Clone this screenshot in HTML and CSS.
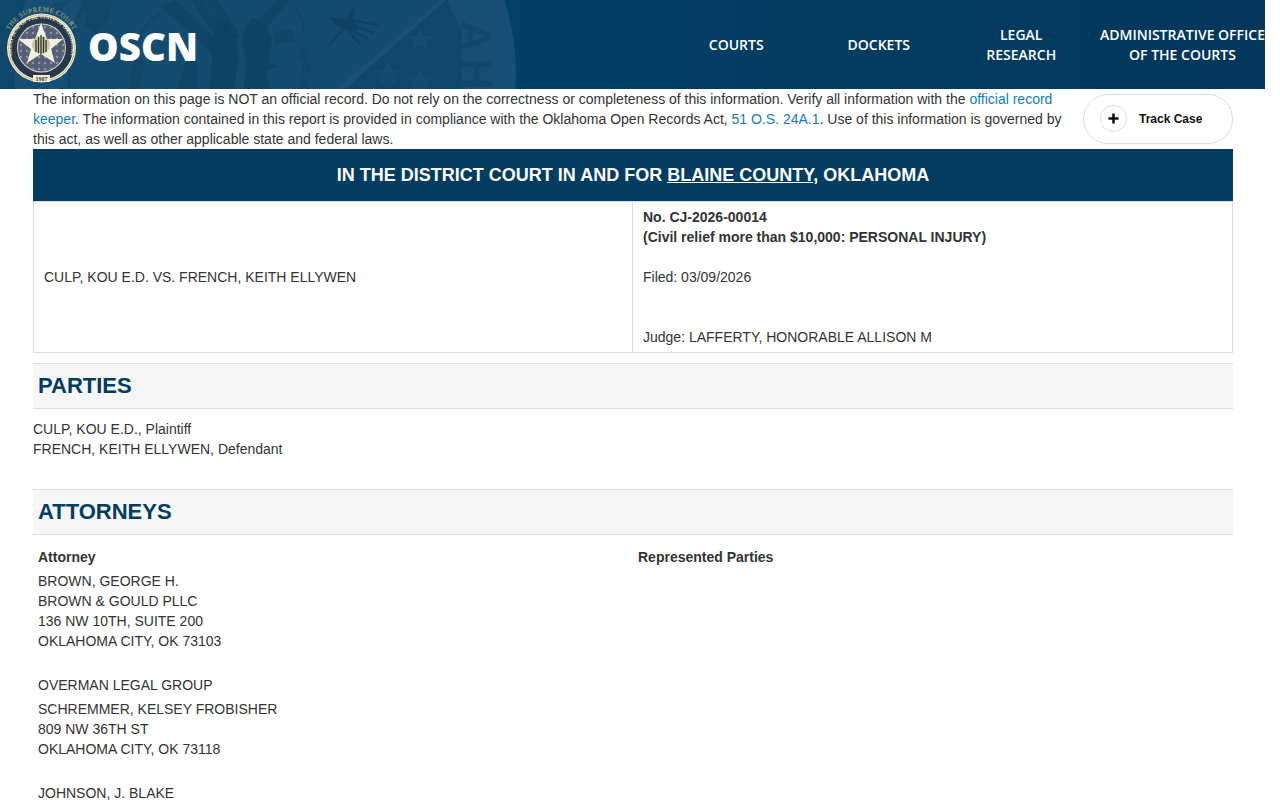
FILE: index.html
```html
<!DOCTYPE html>
<html lang="en">
<head>
    <meta charset="UTF-8">
    <meta name="viewport" content="width=device-width, initial-scale=1.0">
    <title>OSCN - CJ-2026-00014</title>
    <link rel="stylesheet" href="styles.css">
</head>
<body>
    <div class="page">
        <header class="site-header">
            <!-- faded state seal behind the header -->
            <svg class="watermark" viewBox="0 0 660 89" aria-hidden="true">
                <circle cx="265" cy="75" r="251" fill="#174e73"/>
                <circle cx="265" cy="75" r="196" fill="#144b70" stroke="#0f4569" stroke-width="2"/>

                <!-- star field, lower right of the disc -->
                <path d="M345 89L446 0L462 30V89Z" fill="#0f4669"/>
                <path d="M336 89L441 0H446L345 89Z" fill="#18507a"/>
                <g fill="#144b70">
                    <path d="M420 27L424 36L434 36L426 42L429 51L420 45L411 51L414 42L406 36L416 36Z"/>
                    <path d="M388 61L392 70L402 70L394 76L397 85L388 79L379 85L382 76L374 70L384 70Z"/>
                    <path d="M420 68L424 77L434 77L426 83L429 89H411L414 83L406 77L416 77Z"/>
                </g>

                <!-- letters of the ring -->
                <g class="mark-letters">
                    <text transform="translate(461,20) rotate(92)">A</text>
                    <text transform="translate(461,58) rotate(90)">H</text>
                </g>

                <!-- left wreath -->
                <g fill="#104668">
                    <path d="M80 0H112L108 20L96 33L84 26L88 14Z"/>
                    <path d="M128 89L133 62L142 58L144 72L138 89Z"/>
                    <path d="M52 4L72 0L60 12Z" opacity="0.6"/>
                </g>
                <path d="M140 36C146 22 156 14 166 12" fill="none" stroke="#104668" stroke-width="2"/>

                <!-- rays behind the figures -->
                <g fill="#104567">
                    <path d="M160 6L176 0L226 48L218 58Z"/>
                    <path d="M190 0H204L234 44L224 48Z"/>
                    <path d="M206 0H218L240 36L232 42Z"/>
                    <path d="M260 18L278 0H290L266 28Z"/>
                    <path d="M273 33L293 29L296 40L275 44Z"/>
                    <path d="M178 89L186 62L196 60L198 89Z"/>
                </g>

                <!-- two standing figures -->
                <g fill="#0f4366">
                    <path d="M222 20C227 20 230 25 229 31L236 36L238 58L234 89H210L212 58L208 38L216 33C215 27 217 21 222 20Z"/>
                    <path d="M252 18C262 18 270 28 272 40L268 62L278 66L266 72L270 89H244L246 60L242 42C244 30 246 22 252 18Z"/>
                </g>

                <!-- right wreath -->
                <g fill="#104668">
                    <path d="M301 46L308 52L306 60L299 56Z"/>
                    <path d="M304 60L312 66L310 74L303 70Z"/>
                    <path d="M302 72L309 89H299Z"/>
                </g>
                <path d="M296 9C301 15 304 22 303 30" fill="none" stroke="#104668" stroke-width="2"/>

                <!-- arrows and rays, upper right -->
                <g fill="#0e4164">
                    <path d="M328 17L346 19L352 7L356 10L352 20L360 28L350 32L340 28Z"/>
                </g>
                <g stroke="#0e4164" stroke-width="2" fill="none">
                    <path d="M343 30L328 46"/>
                    <path d="M350 20L378 25M352 25L374 33M350 29L368 39M348 31L360 44"/>
                </g>
            </svg>

            <a class="brand" href="#">
                <svg class="seal" viewBox="0 0 84 89" aria-hidden="true">
                    <defs>
                        <path id="sealTop" d="M5 48A36.5 36.5 0 0 1 78 48"/>
                        <path id="sealInner" d="M18 67A30 30 0 1 1 65 67"/>
                        <pattern id="sealDots" width="6" height="6" patternUnits="userSpaceOnUse">
                            <circle cx="3" cy="3" r="1.2" fill="#8b95a8"/>
                        </pattern>
                    </defs>
                    <circle cx="41.5" cy="48" r="34.5" fill="#f1eed9"/>
                    <circle cx="41.5" cy="48" r="33" fill="none" stroke="#a7a266" stroke-width="0.8"/>
                    <circle cx="41.5" cy="48" r="31.5" fill="#26384a"/>
                    <circle cx="41.5" cy="48" r="24.5" fill="#d9d6bf"/>
                    <circle cx="41.5" cy="48" r="23.5" fill="#555f78"/>
                    <circle cx="41.5" cy="48" r="23.5" fill="url(#sealDots)"/>
                    <polygon points="41,23 47,39 63,39 51,49 55,63 41,54 27,63 31,49 18,39 35,39" fill="#f2f0df"/>
                    <circle cx="41" cy="45" r="9" fill="#c9c7a7"/>
                    <path d="M36 52V40M38.5 53V37M41 54V35M43.5 53V37M46 52V40" stroke="#30382c" stroke-width="1.3"/>
                    <text class="seal-ring"><textPath href="#sealInner" startOffset="50%">GREAT SEAL OF THE STATE OF OKLAHOMA</textPath></text>
                    <text class="seal-top"><textPath href="#sealTop" startOffset="50%">THE SUPREME COURT</textPath></text>
                    <rect x="33" y="75" width="17" height="7" fill="#f1eed9"/>
                    <text class="seal-year" x="41.5" y="80.5">1907</text>
                </svg>
                <span class="brand-name">OSCN</span>
            </a>

            <nav class="main-nav">
                <a href="#">COURTS</a>
                <a href="#">DOCKETS</a>
                <a href="#">LEGAL<br>RESEARCH</a>
                <a href="#" class="wide">ADMINISTRATIVE OFFICE<br>OF THE COURTS</a>
            </nav>
        </header>

        <main class="content">
            <div class="notice-row">
                <p class="notice">The information on this page is NOT an official record. Do not rely on the correctness or completeness of this information. Verify all information with the <a href="#">official record keeper</a>. The information contained in this report is provided in compliance with the Oklahoma Open Records Act, <a href="#">51 O.S. 24A.1</a>. Use of this information is governed by this act, as well as other applicable state and federal laws.</p>
                <button class="track-button" type="button">
                    <span class="track-icon">
                        <svg viewBox="0 0 12 12" aria-hidden="true"><path d="M6 0.5V11.5M0.5 6H11.5" stroke="#111" stroke-width="2.8"/></svg>
                    </span>
                    <span>Track Case</span>
                </button>
            </div>

            <h2 class="court-title">IN THE DISTRICT COURT IN AND FOR <a href="#">BLAINE COUNTY</a>, OKLAHOMA</h2>

            <div class="case-style">
                <div class="case-cell case-names">CULP, KOU E.D. VS. FRENCH, KEITH ELLYWEN</div>
                <div class="case-cell">
                    <strong>No. CJ-2026-00014<br>(Civil relief more than $10,000: PERSONAL INJURY)</strong><br>
                    <br>
                    Filed: 03/09/2026<br>
                    <br>
                    <br>
                    Judge: LAFFERTY, HONORABLE ALLISON M
                </div>
            </div>

            <h2 class="section-title parties-title">PARTIES</h2>
            <div class="parties">
                CULP, KOU E.D., Plaintiff<br>
                FRENCH, KEITH ELLYWEN, Defendant
            </div>

            <h2 class="section-title attorneys-title">ATTORNEYS</h2>
            <div class="attorneys">
                <div class="attorney-head">
                    <div>Attorney</div>
                    <div>Represented Parties</div>
                </div>
                <div class="attorney-row">BROWN, GEORGE H.<br>BROWN &amp; GOULD PLLC<br>136 NW 10TH, SUITE 200<br>OKLAHOMA CITY, OK 73103<br><br></div>
                <div class="attorney-row">OVERMAN LEGAL GROUP</div>
                <div class="attorney-row">SCHREMMER, KELSEY FROBISHER<br>809 NW 36TH ST<br>OKLAHOMA CITY, OK 73118<br><br></div>
                <div class="attorney-row">JOHNSON, J. BLAKE</div>
            </div>
        </main>
    </div>
</body>
</html>
```

FILE: styles.css
```css
html, body {
    margin: 0;
    padding: 0;
    background: white;
}

body {
    font-family: "Liberation Sans", Arial, sans-serif;
    font-size: 14px;
    line-height: 20px;
    color: #333;
}

.page {
    width: 1265px;
    overflow: hidden;
}

/* Header */
.site-header {
    position: relative;
    display: flex;
    justify-content: space-between;
    height: 89px;
    background: linear-gradient(90deg, #0f466b 0%, #034067 42%, #033d63 60%, #03365a 100%);
    overflow: hidden;
}

.watermark {
    position: absolute;
    top: 0;
    left: 0;
    width: 660px;
    height: 89px;
}

.mark-letters {
    font-family: "Liberation Sans", Arial, sans-serif;
    font-size: 44px;
    font-weight: bold;
    fill: #10476b;
}

.brand {
    position: relative;
    display: flex;
    align-items: center;
    color: white;
    text-decoration: none;
}

.seal {
    width: 84px;
    height: 89px;
}

.seal-top {
    font-family: "Liberation Serif", serif;
    font-size: 7px;
    letter-spacing: 0.3px;
    text-anchor: middle;
    fill: #b5b46c;
}

.seal-ring {
    font-family: "Liberation Serif", serif;
    font-size: 5px;
    font-weight: bold;
    text-anchor: middle;
    fill: #f1eed9;
}

.seal-year {
    font-family: "Liberation Serif", serif;
    font-size: 6px;
    font-weight: bold;
    text-anchor: middle;
    fill: #333;
}

.brand-name {
    margin: 2px 0 0 4px;
    font-family: "Open Sans", sans-serif;
    font-size: 38.5px;
    font-weight: 800;
    line-height: 40px;
}

.main-nav {
    position: relative;
    display: flex;
    flex-shrink: 0;
    width: 600px;
    font-family: "Open Sans", sans-serif;
    font-size: 14px;
    font-weight: 600;
}

.main-nav a {
    display: flex;
    align-items: center;
    justify-content: center;
    width: 142.5px;
    flex-shrink: 0;
    color: white;
    text-align: center;
    text-decoration: none;
}

.main-nav a.wide {
    width: 180px;
}

/* Page body */
.content {
    width: 1200px;
    margin-left: 33px;
}

.notice-row {
    display: flex;
    justify-content: space-between;
    height: 60px;
}

.notice {
    width: 1040px;
    margin: 0;
}

.notice a {
    color: #0f7dba;
    text-decoration: none;
}

.track-button {
    display: flex;
    align-items: center;
    width: 150px;
    height: 50px;
    margin-top: 5px;
    padding: 0 0 1px 16px;
    font-family: "Liberation Sans", Arial, sans-serif;
    font-size: 12px;
    font-weight: bold;
    color: #111;
    background: white;
    border: 1px solid #ddd;
    border-radius: 25px;
}

.track-icon {
    display: flex;
    align-items: center;
    justify-content: center;
    width: 27px;
    height: 27px;
    margin-right: 12px;
    border: 1px solid #ddd;
    border-radius: 50%;
    box-sizing: border-box;
}

.track-icon svg {
    width: 11px;
    height: 11px;
}

.court-title {
    margin: 0;
    height: 52px;
    font-size: 18px;
    line-height: 52px;
    font-weight: bold;
    text-align: center;
    color: white;
    background: #033c61;
}

.court-title a {
    color: white;
}

.case-style {
    display: grid;
    grid-template-columns: 599px 599px;
    border: 1px solid #ddd;
}

.case-cell {
    padding: 5px 10px;
}

.case-names {
    display: flex;
    align-items: center;
    border-right: 1px solid #ddd;
}

.section-title {
    margin: 0;
    height: 44px;
    padding-left: 5px;
    font-size: 22px;
    line-height: 44px;
    font-weight: bold;
    color: #033c61;
    background: #f6f6f6;
    border-top: 1px solid #ddd;
    border-bottom: 1px solid #ddd;
}

.parties-title {
    margin-top: 10px;
}

.parties {
    padding-top: 10px;
}

.attorneys-title {
    margin-top: 30px;
}

.attorneys {
    padding: 12px 0 0 5px;
}

.attorney-head {
    display: grid;
    grid-template-columns: 600px 1fr;
    font-weight: bold;
}

.attorney-row {
    padding-top: 4px;
}
```
